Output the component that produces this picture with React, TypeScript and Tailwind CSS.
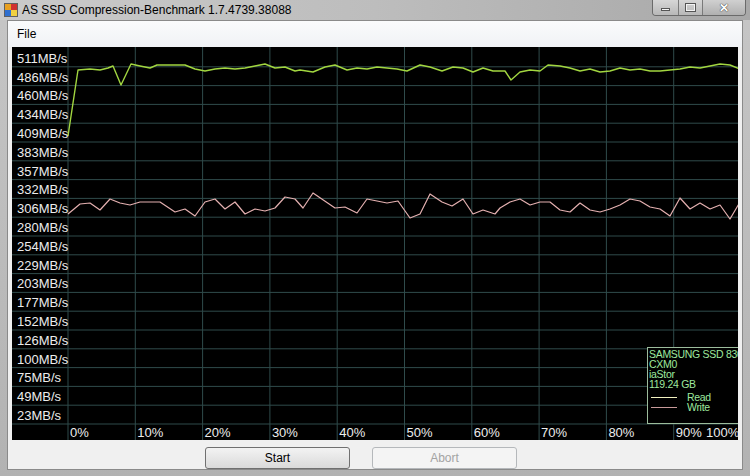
import React from "react";

const CX = 12; // chart left (abs)
const CY = 48; // chart top (abs)

const readAbs: [number, number][] = [
  [68, 137], [78, 71], [90, 70], [100, 71], [108, 69], [113, 67], [121, 86], [131, 65], [140, 67], [150, 69],
  [157, 66], [175, 66], [185, 66], [195, 70], [205, 72], [215, 70], [225, 69], [235, 70], [245, 69], [255, 67],
  [265, 65], [275, 69], [285, 68], [295, 72], [300, 71], [313, 73], [325, 68], [335, 66], [347, 71], [357, 69],
  [367, 70], [377, 68], [387, 69], [397, 70], [407, 72], [420, 66], [430, 68], [442, 72], [453, 68], [463, 69],
  [473, 73], [483, 69], [493, 72], [505, 72], [511, 81], [520, 73], [530, 71], [540, 72], [548, 66], [560, 67],
  [570, 69], [580, 72], [590, 70], [600, 73], [610, 72], [620, 69], [630, 71], [640, 70], [650, 72], [660, 72],
  [670, 71], [680, 70], [690, 68], [700, 69], [710, 67], [720, 65], [730, 66], [740, 70],
];

const writeAbs: [number, number][] = [
  [68, 215], [80, 205], [90, 204], [100, 211], [110, 200], [120, 204], [130, 206], [140, 203], [160, 203], [175, 213],
  [185, 210], [195, 217], [205, 203], [215, 200], [225, 210], [235, 203], [245, 215], [255, 210], [265, 212], [275, 209],
  [285, 198], [295, 200], [303, 209], [313, 194], [335, 209], [345, 208], [357, 214], [367, 200], [387, 204], [398, 202],
  [410, 219], [420, 215], [430, 195], [442, 203], [452, 207], [463, 200], [473, 215], [483, 211], [495, 215], [500, 209],
  [510, 203], [520, 200], [530, 206], [540, 203], [550, 203], [560, 211], [570, 213], [580, 204], [590, 211], [600, 213],
  [610, 210], [620, 206], [630, 200], [640, 202], [650, 208], [660, 210], [670, 217], [680, 199], [690, 210], [700, 204],
  [710, 210], [720, 206], [730, 220], [740, 203],
];

const toPts = (arr: [number, number][]) => arr.map(([x, y]) => `${x - CX},${y - CY}`).join(" ");

const yLabels = [
  "511MB/s", "486MB/s", "460MB/s", "434MB/s", "409MB/s", "383MB/s", "357MB/s", "332MB/s", "306MB/s", "280MB/s",
  "254MB/s", "229MB/s", "203MB/s", "177MB/s", "152MB/s", "126MB/s", "100MB/s", "75MB/s", "49MB/s", "23MB/s",
];
const xLabels = ["0%", "10%", "20%", "30%", "40%", "50%", "60%", "70%", "80%", "90%"];

const ROW = 18.8;
const W = 729;
const H = 393;

function Chart() {
  const hLines = Array.from({ length: 20 }, (_, k) => 1 + ROW * (k + 1));
  const vLines = Array.from({ length: 10 }, (_, i) => 56 + 67.3 * i);
  return (
    <div className="relative mx-[4px] h-[393px] bg-black overflow-hidden" style={{ fontFamily: '"Liberation Sans", Arial, sans-serif' }}>
      <svg className="absolute left-0 top-0" width={W} height={H}>
        {hLines.map((y, k) => (
          <line key={"h" + k} x1={0} x2={W} y1={y} y2={y} stroke="#2f4b4b" strokeWidth={1} />
        ))}
        {vLines.map((x, k) => (
          <line key={"v" + k} x1={x} x2={x} y1={0} y2={H} stroke="#2f4b4b" strokeWidth={1} />
        ))}
        <polyline points={toPts(writeAbs)} fill="none" stroke="#e4b0b0" strokeWidth={1.2} strokeLinejoin="round" />
        <polyline points={toPts(readAbs)} fill="none" stroke="#a2d640" strokeWidth={1.4} strokeLinejoin="round" />
      </svg>
      <div className="relative flex flex-col pt-[2px] pl-[5px]">
        {yLabels.map((l) => (
          <div key={l} className="h-[18.8px] flex items-center text-[13px] leading-none text-[#ececec]">
            {l}
          </div>
        ))}
      </div>
      {xLabels.map((l, i) => (
        <div
          key={l}
          className="absolute top-[379px] text-[13px] leading-none text-[#ececec]"
          style={{ left: 58 + 67.3 * i }}
        >
          {l}
        </div>
      ))}
      <div className="absolute top-[379px] left-[694px] text-[13px] leading-none text-[#ececec]">100%</div>
      <div className="absolute left-[635px] top-[300px] w-[100px] h-[77px] border border-[#9cbc9c] bg-black pl-[1px] pt-[1px] text-[10.5px] leading-[10px] tracking-[-0.3px] text-[#9ee89e] whitespace-nowrap">
        <div>SAMSUNG SSD 830</div>
        <div>CXM0</div>
        <div>iaStor</div>
        <div>119.24 GB</div>
        <div className="flex items-center mt-[3px]">
          <div className="w-[26px] h-[1px] bg-[#f2f2c0] ml-[2px]" />
          <span className="ml-[10px]">Read</span>
        </div>
        <div className="flex items-center">
          <div className="w-[26px] h-[1px] bg-[#c89a9a] ml-[2px]" />
          <span className="ml-[10px]">Write</span>
        </div>
      </div>
    </div>
  );
}

function AppIcon() {
  return (
    <svg width="14" height="14" viewBox="0 0 14 14">
      <rect x="1" y="1" width="6" height="6" fill="#e8a020" />
      <rect x="7" y="1" width="6" height="6" fill="#d03030" />
      <rect x="1" y="7" width="6" height="6" fill="#3070d0" />
      <rect x="7" y="7" width="6" height="6" fill="#f0d040" />
      <rect x="0.5" y="0.5" width="13" height="13" fill="none" stroke="#606060" />
    </svg>
  );
}

export default function App() {
  return (
    <div
      className="w-[750px] h-[476px] flex flex-col bg-gradient-to-b from-[#c6c6c6] to-[#b2b2b2] overflow-hidden"
      style={{ fontFamily: '"Liberation Sans", Arial, sans-serif' }}
    >
      {/* Title bar */}
      <div className="h-[21px] flex items-start relative bg-gradient-to-r from-[#cacaca] via-[#bdbdbd] to-[#a8a8a8]">
        <div className="flex items-center h-[20px] pl-[4px] gap-[4px]">
          <AppIcon />
          <span className="text-[12px] text-black leading-none">AS SSD Compression-Benchmark 1.7.4739.38088</span>
        </div>
        <div className="ml-auto mr-[4px] flex h-[16px] border border-t-0 border-[#6a6a6a] rounded-b-[4px] overflow-hidden">
          <div className="w-[26px] flex items-center justify-center bg-gradient-to-b from-[#d6d6d6] to-[#b8b8b8] border-r border-[#7a7a7a]">
            <div className="w-[9px] h-[3px] bg-[#f4f4f4] border border-[#555] mt-[4px]" />
          </div>
          <div className="w-[24px] flex items-center justify-center bg-gradient-to-b from-[#d6d6d6] to-[#b8b8b8] border-r border-[#7a7a7a]">
            <div className="w-[9px] h-[7px] border border-[#f4f4f4] outline outline-1 outline-[#555]" />
          </div>
          <div className="w-[42px] flex items-center justify-center bg-gradient-to-b from-[#d0d0d0] to-[#b0b0b0]">
            <span className="text-[12px] font-bold text-white leading-none" style={{ textShadow: "0 0 1px #333, 0 0 1px #333" }}>✕</span>
          </div>
        </div>
      </div>
      {/* Client */}
      <div className="flex-1 mx-[7px] mb-[7px] flex flex-col bg-[#f0f0f0] border border-[#8a8a8a]">
        <div className="h-[26px] bg-gradient-to-b from-[#fafbfc] to-[#f0f2f5] flex items-center pl-[9px]">
          <span className="text-[12px] text-black leading-none">File</span>
        </div>
        <Chart />
        <div className="flex-1 flex items-start justify-start pl-[197px] pt-[7px] gap-[22px]">
          <button className="w-[145px] h-[22px] rounded-[3px] border border-[#707070] bg-gradient-to-b from-[#f3f3f3] to-[#dadada] text-[12px] text-black leading-none">
            Start
          </button>
          <button className="w-[145px] h-[22px] rounded-[3px] border border-[#b5b8bb] bg-[#f4f4f4] text-[12px] text-[#a3a3a3] leading-none">
            Abort
          </button>
        </div>
      </div>
    </div>
  );
}
